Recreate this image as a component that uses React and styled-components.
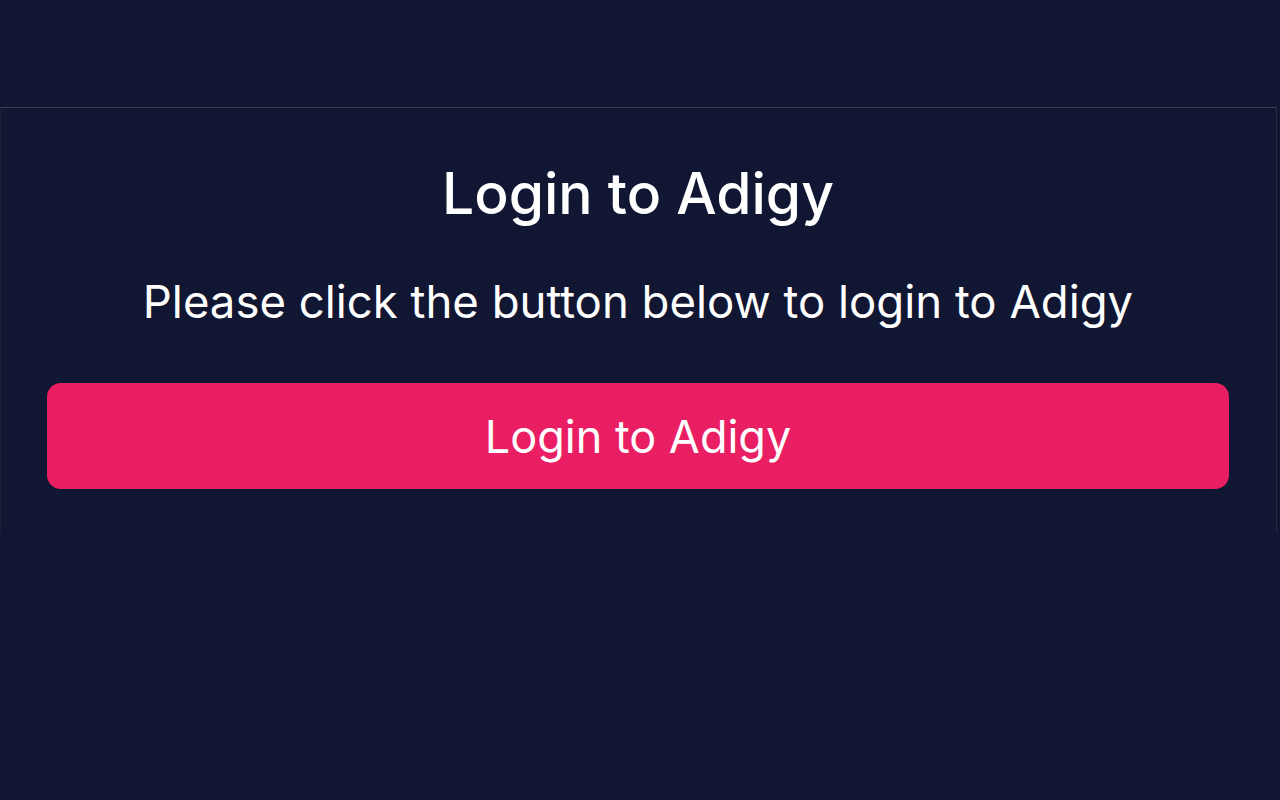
import React from 'react';
import styled, { createGlobalStyle } from 'styled-components';

const GlobalStyle = createGlobalStyle`
	html, body {
		margin: 0;
		padding: 0;
		background-color: #111633;
		font-family: Inter, "Noto Sans", sans-serif;
		color: #ffffff;
	}
`;

const Page = styled.div`
	width: 1280px;
	height: 800px;
	padding-top: 107px;
	box-sizing: border-box;
`;

const Panel = styled.section`
	width: 1277px;
	height: 426px;
	box-sizing: border-box;
	border-top: 1px solid #3b3e4c;
	border-left: 1px solid #1d2136;
	border-right: 1px solid #262a3d;
	display: flex;
	flex-direction: column;
	align-items: center;
	padding: 0 47px 0 46px;
`;

const Title = styled.h1`
	font-size: 57px;
	font-weight: 500;
	margin: 52px 0 0;
	line-height: 68px;
`;

const Text = styled.p`
	font-size: 45.5px;
	font-weight: 400;
	margin: 46px 0 0;
	line-height: 56px;
`;

const LoginButton = styled.button`
	margin-top: 53px;
	width: 100%;
	height: 106px;
	border: none;
	border-radius: 14px;
	background-color: #e91e63;
	color: #ffffff;
	font-family: inherit;
	font-size: 45px;
	font-weight: 400;
	cursor: pointer;
`;

const App = () => {
	return (
		<>
			<GlobalStyle />
			<Page>
				<Panel>
					<Title>Login to Adigy</Title>
					<Text>Please click the button below to login to Adigy</Text>
					<LoginButton>Login to Adigy</LoginButton>
				</Panel>
			</Page>
		</>
	);
};

export default App;
